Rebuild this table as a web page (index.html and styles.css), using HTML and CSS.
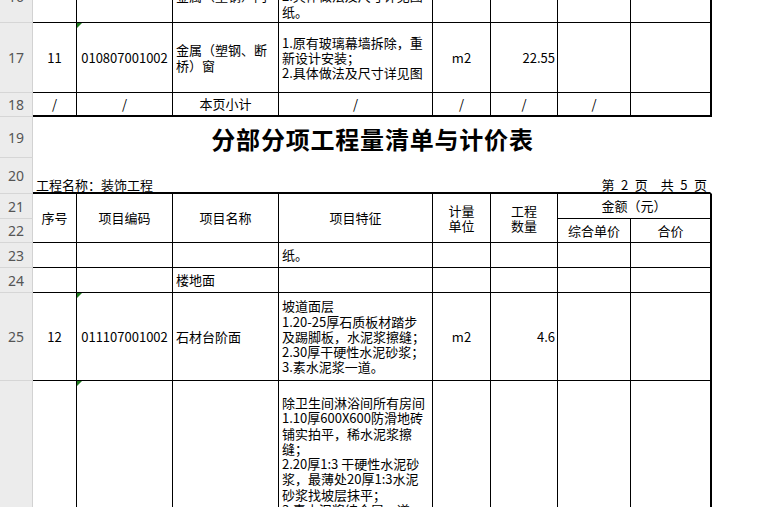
FILE: index.html
```html
<!DOCTYPE html>
<html lang="zh-CN">
<head>
<meta charset="utf-8">
<title>分部分项工程量清单与计价表</title>
<link rel="stylesheet" href="styles.css">
</head>
<body>
<div class="sheet">
  <!-- row 16 -->
  <div class="rh">16</div>
  <div class="c"></div>
  <div class="c"></div>
  <div class="c l">金属（塑钢）门</div>
  <div class="c l">新设计安装；<br>2.具体做法及尺寸详见图<br>纸。</div>
  <div class="c"></div>
  <div class="c"></div>
  <div class="c"></div>
  <div class="c h"></div>

  <!-- row 17 -->
  <div class="rh">17</div>
  <div class="c">11</div>
  <div class="c tri">010807001002</div>
  <div class="c l">金属（塑钢、断<br>桥）窗</div>
  <div class="c l">1.原有玻璃幕墙拆除，重<br>新设计安装；<br>2.具体做法及尺寸详见图</div>
  <div class="c">m2</div>
  <div class="c r">22.55</div>
  <div class="c"></div>
  <div class="c h"></div>

  <!-- row 18 -->
  <div class="rh">18</div>
  <div class="c tb">/</div>
  <div class="c tb">/</div>
  <div class="c tb">本页小计</div>
  <div class="c tb">/</div>
  <div class="c tb">/</div>
  <div class="c tb">/</div>
  <div class="c tb">/</div>
  <div class="c tb h"></div>

  <!-- row 19 -->
  <div class="rh">19</div>
  <div class="title">分部分项工程量清单与计价表</div>

  <!-- row 20 -->
  <div class="rh">20</div>
  <div class="proj">工程名称：装饰工程</div>
  <div class="page">第&ensp;2&ensp;页&ensp;&ensp;共&ensp;5&ensp;页</div>

  <!-- rows 21-22 header -->
  <div class="rh">21</div>
  <div class="c span2">序号</div>
  <div class="c span2">项目编码</div>
  <div class="c span2">项目名称</div>
  <div class="c span2">项目特征</div>
  <div class="c span2">计量<br>单位</div>
  <div class="c span2">工程<br>数量</div>
  <div class="c money h">金额（元）</div>
  <div class="rh">22</div>
  <div class="c">综合单价</div>
  <div class="c h">合价</div>

  <!-- row 23 -->
  <div class="rh">23</div>
  <div class="c"></div>
  <div class="c"></div>
  <div class="c"></div>
  <div class="c l">纸。</div>
  <div class="c"></div>
  <div class="c"></div>
  <div class="c"></div>
  <div class="c h"></div>

  <!-- row 24 -->
  <div class="rh">24</div>
  <div class="c"></div>
  <div class="c"></div>
  <div class="c l">楼地面</div>
  <div class="c"></div>
  <div class="c"></div>
  <div class="c"></div>
  <div class="c"></div>
  <div class="c h"></div>

  <!-- row 25 -->
  <div class="rh">25</div>
  <div class="c">12</div>
  <div class="c tri">011107001002</div>
  <div class="c l">石材台阶面</div>
  <div class="c l">坡道面层<br>1.20-25厚石质板材踏步<br>及踢脚板，水泥浆擦缝；<br>2.30厚干硬性水泥砂浆；<br>3.素水泥浆一道。</div>
  <div class="c">m2</div>
  <div class="c r">4.6</div>
  <div class="c"></div>
  <div class="c h"></div>

  <!-- row 26 -->
  <div class="rh">26</div>
  <div class="c"></div>
  <div class="c tri"></div>
  <div class="c"></div>
  <div class="c l top">除卫生间淋浴间所有房间<br>1.10厚600X600防滑地砖<br>铺实拍平，稀水泥浆擦<br>缝；<br>2.20厚1:3 干硬性水泥砂<br>浆，最薄处20厚1:3水泥<br>砂浆找坡层抹平；<br>3.素水泥浆结合层一道；</div>
  <div class="c"></div>
  <div class="c"></div>
  <div class="c"></div>
  <div class="c h"></div>
</div>
</body>
</html>
```

FILE: styles.css
```css
* { box-sizing: border-box; }

html, body {
  margin: 0;
  padding: 0;
  background: #ffffff;
  overflow: hidden;
}

body {
  width: 769px;
  height: 507px;
  font-family: "Noto Sans CJK SC", sans-serif;
  font-size: 13px;
  color: #000000;
}

.sheet {
  display: grid;
  width: 712px;
  grid-template-columns: 33px 44px 96px 106px 154px 58px 67px 73px 81px;
  grid-template-rows: 53px 70px 24px 41px 36px 25px 24px 25px 25px 88px 300px;
  margin-top: -30px;
}

.rh {
  background: #ececec;
  border-right: 1px solid #d2d2d2;
  border-bottom: 1px solid #d6d6d6;
  color: #555555;
  font-family: "Noto Sans", "Liberation Sans", sans-serif;
  font-size: 14px;
  display: flex;
  align-items: center;
  justify-content: center;
}

.c {
  position: relative;
  border-right: 1px solid #000;
  border-bottom: 1px solid #000;
  display: flex;
  align-items: center;
  justify-content: center;
  text-align: center;
  line-height: 15.3px;
  white-space: nowrap;
  overflow: hidden;
}

.l {
  justify-content: flex-start;
  text-align: left;
  padding-left: 3px;
}

.r {
  justify-content: flex-end;
  padding-right: 2px;
}

.top {
  align-items: flex-start;
  padding-top: 14px;
}

.h { border-right-width: 2px; }

.tb { border-bottom-width: 2px; }

.span2 { grid-row: span 2; }

.money { grid-column: span 2; }

.tri::before {
  content: "";
  position: absolute;
  top: 0;
  left: 0;
  border-top: 5px solid #1f7a1f;
  border-right: 5px solid transparent;
}

.title {
  grid-column: span 8;
  display: flex;
  align-items: center;
  justify-content: center;
  font-size: 24px;
  font-weight: 700;
  letter-spacing: 0.8px;
  padding-top: 2px;
}

.proj {
  grid-column: span 4;
  display: flex;
  align-items: flex-end;
  padding-left: 3px;
  border-bottom: 2px solid #000;
  line-height: 15px;
  white-space: nowrap;
}

.page {
  grid-column: span 4;
  display: flex;
  align-items: flex-end;
  justify-content: flex-end;
  padding-right: 3px;
  border-right: 2px solid transparent;
  border-bottom: 2px solid #000;
  line-height: 15px;
  white-space: nowrap;
}
```
